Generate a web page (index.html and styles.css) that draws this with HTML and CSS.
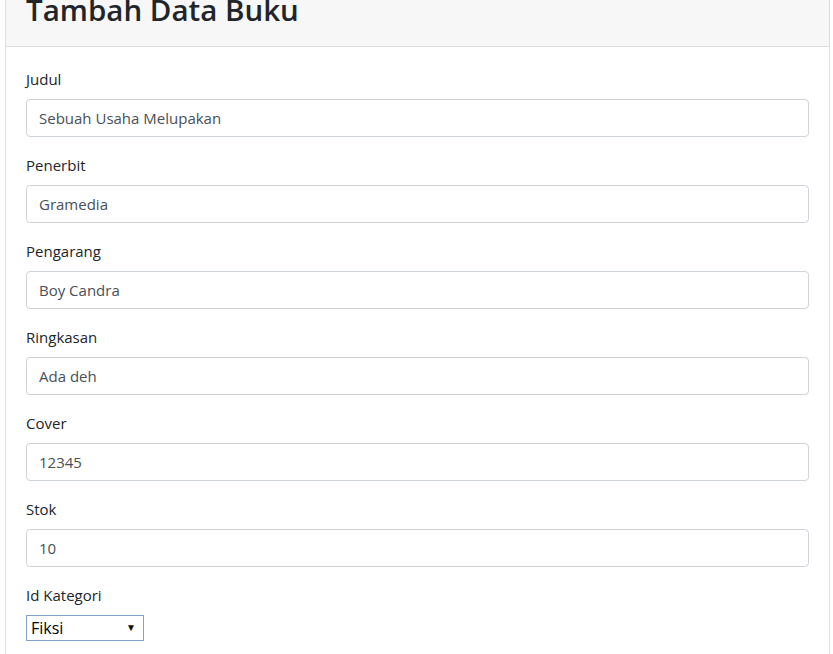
FILE: index.html
```html
<!DOCTYPE html>
<html lang="id">
<head>
<meta charset="utf-8">
<title>Tambah Data Buku</title>
<link rel="stylesheet" href="styles.css">
</head>
<body>
<div class="page">
  <div class="card">
    <div class="card-header">
      <h2 class="title">Tambah Data Buku</h2>
    </div>
    <div class="card-body">
      <div class="form-group">
        <label class="label">Judul</label>
        <input class="form-control" type="text" value="Sebuah Usaha Melupakan">
      </div>
      <div class="form-group">
        <label class="label">Penerbit</label>
        <input class="form-control" type="text" value="Gramedia">
      </div>
      <div class="form-group">
        <label class="label">Pengarang</label>
        <input class="form-control" type="text" value="Boy Candra">
      </div>
      <div class="form-group">
        <label class="label">Ringkasan</label>
        <input class="form-control" type="text" value="Ada deh">
      </div>
      <div class="form-group">
        <label class="label">Cover</label>
        <input class="form-control" type="text" value="12345">
      </div>
      <div class="form-group">
        <label class="label">Stok</label>
        <input class="form-control" type="text" value="10">
      </div>
      <div class="form-group">
        <label class="label">Id Kategori</label>
        <span class="select-wrap">
          <select class="select">
            <option>Fiksi</option>
          </select>
          <span class="select-arrow">&#9660;</span>
        </span>
      </div>
    </div>
  </div>
</div>
</body>
</html>
```
FILE: styles.css
```css
html, body {
  margin: 0;
  padding: 0;
  background: #ffffff;
  overflow: hidden;
}
body {
  font-family: "Open Sans", "Noto Sans", sans-serif;
  font-size: 16px;
  line-height: 24px;
  color: #212529;
}
.page {
  padding: 0 3px 0 5px;
  margin-top: -22px;
}
.card {
  border: 1px solid #dfdfdf;
  border-radius: 4px;
  background: #fff;
}
.card-header {
  background: #f7f7f7;
  border-bottom: 1px solid #dfdfdf;
  padding: 12px 20px;
}
.title {
  margin: 0 0 5px 0;
  font-size: 29.5px;
  font-weight: 600;
  line-height: 38px;
  color: #212529;
}
.card-body {
  padding: 20px 20px;
}
.form-group {
  margin-bottom: 16px;
  display: flex;
  flex-direction: column;
  align-items: flex-start;
}
.label {
  display: block;
  margin-bottom: 8px;
  line-height: 24px;
  font-size: 15px;
}
.form-control {
  box-sizing: border-box;
  width: 100%;
  height: 38px;
  padding: 6px 12px;
  font-family: inherit;
  font-size: 15px;
  line-height: 24px;
  color: #495057;
  background: #fff;
  border: 1px solid #ced4da;
  border-radius: 4px;
  outline: none;
  margin: 0;
}
.select-wrap {
  position: relative;
  display: inline-block;
  width: 118px;
  height: 26px;
}
.select {
  -webkit-appearance: none;
  appearance: none;
  box-sizing: border-box;
  width: 118px;
  height: 26px;
  margin: 0;
  padding: 0 0 0 4px;
  font-family: inherit;
  font-size: 16px;
  line-height: 24px;
  color: #000;
  background: #fff;
  border: 1px solid #7da2ce;
  border-radius: 0;
  outline: none;
}
.select-arrow {
  position: absolute;
  right: 8px;
  top: 7px;
  font-size: 10px;
  line-height: 10px;
  color: #111;
  pointer-events: none;
}
```
